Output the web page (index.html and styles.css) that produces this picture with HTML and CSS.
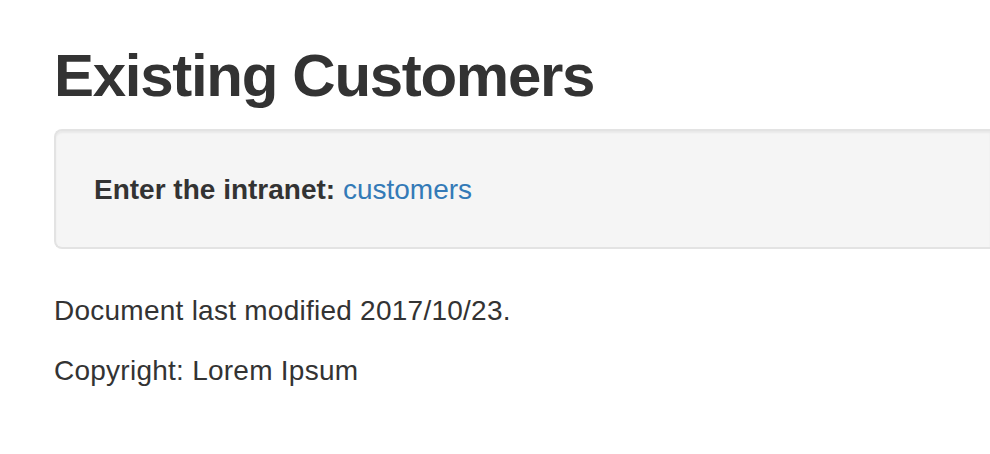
FILE: index.html
```html
<!DOCTYPE html>
<html lang="en">
<head>
<meta charset="utf-8">
<title>Existing Customers</title>
<link rel="stylesheet" href="styles.css">
</head>
<body>
<div class="container">
  <h2 class="title">Existing Customers</h2>
  <div class="well">
    <strong>Enter the intranet:</strong> <a href="#" class="link">customers</a>
  </div>
  <p class="note">Document last modified 2017/10/23.</p>
  <p class="note">Copyright: Lorem Ipsum</p>
</div>
</body>
</html>
```
FILE: styles.css
```css
html, body {
  margin: 0;
  padding: 0;
  background: #ffffff;
}
body {
  font-family: "Liberation Sans", Arial, Helvetica, sans-serif;
  font-size: 28px;
  line-height: 40px;
  color: #333333;
}
.container {
  padding-left: 54px;
}
.title {
  font-size: 60px;
  line-height: 66px;
  font-weight: 700;
  letter-spacing: -1.3px;
  margin: 43px 0 20px;
  color: #333333;
}
.well {
  background: #f5f5f5;
  border: 2px solid #e3e3e3;
  border-right: none;
  border-radius: 8px 0 0 8px;
  padding: 39px 38px 37px;
  box-shadow: inset 0 2px 2px rgba(0, 0, 0, 0.05);
  margin-bottom: 42px;
}
.well strong {
  font-weight: 700;
}
.link {
  color: #337ab7;
  text-decoration: none;
}
.note {
  margin: 0 0 20px;
  letter-spacing: 0.25px;
}
```
